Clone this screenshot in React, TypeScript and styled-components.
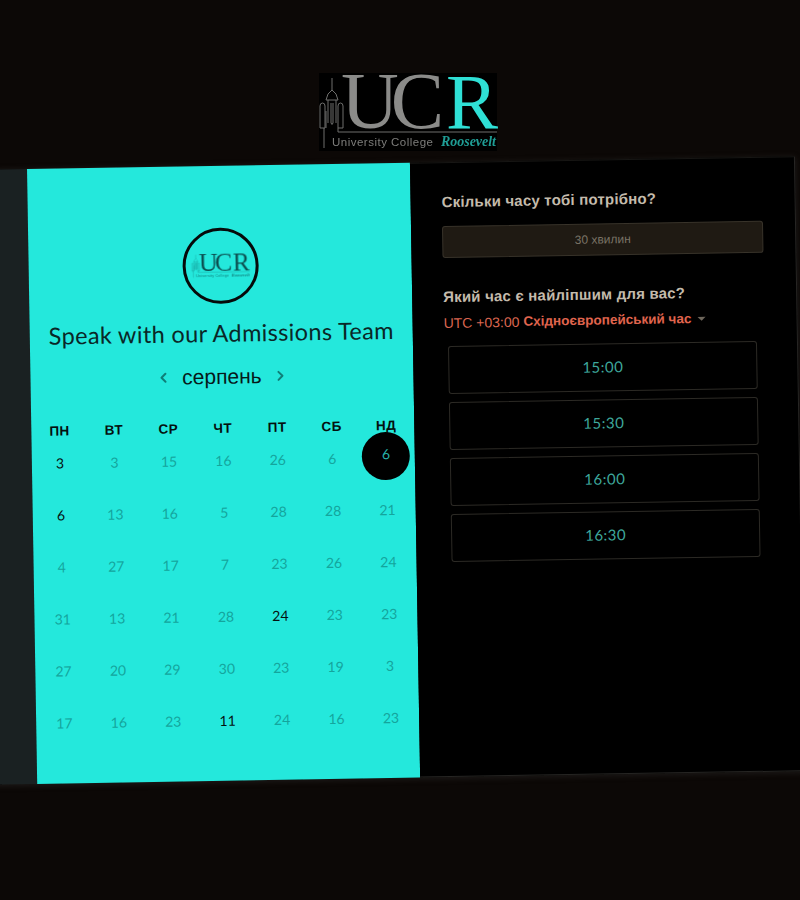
import React from "react";
import styled, { createGlobalStyle } from "styled-components";
import { ChevronLeft, ChevronRight } from "lucide-react";

const GlobalStyle = createGlobalStyle`
  html, body {
    margin: 0;
    padding: 0;
    height: 900px;
    overflow: hidden;
    background: #0c0806;
  }
`;

const Page = styled.div`
  width: 800px;
  height: 900px;
  overflow: hidden;
  display: flex;
  flex-direction: column;
  align-items: flex-start;
`;

const LogoBar = styled.div`
  width: 800px;
  height: 78px;
  margin-top: 73px;
  padding-left: 319px;
  box-sizing: border-box;
  flex-shrink: 0;
`;

const BrandSvg = styled.svg`
  display: block;
  overflow: visible;
  filter: blur(0.35px);
`;

const Card = styled.div`
  display: flex;
  flex-shrink: 0;
  margin: 18px 0 0 -20px;
  height: 615px;
  transform: rotate(-0.95deg);
  transform-origin: 47px 0;
  box-shadow: 0 1px 6px rgba(70, 70, 70, 0.35);
`;

const Sliver = styled.div`
  width: 47px;
  background: #1a2122;
`;

const LeftPanel = styled.section`
  width: 383px;
  padding-top: 62px;
  box-sizing: border-box;
  background: #24e8dc;
  display: flex;
  flex-direction: column;
  align-items: center;
`;

const Avatar = styled.div`
  width: 76px;
  height: 76px;
  box-sizing: border-box;
  border: 3px solid #060a0a;
  border-radius: 50%;
  display: flex;
  align-items: center;
  justify-content: center;
`;

const Title = styled.h1`
  margin: 14px 0 0;
  font: 400 23.5px/30px Lato, "Open Sans", sans-serif;
  letter-spacing: 0.35px;
  color: #0a2727;
  white-space: nowrap;
`;

const MonthRow = styled.div`
  margin-top: 17px;
  height: 24px;
  display: flex;
  align-items: center;
  gap: 11px;
  color: #0f7f78;
`;

const MonthName = styled.span`
  font: 400 21px/24px "Liberation Sans", Arial, sans-serif;
  color: #061a1a;
`;

const Calendar = styled.div`
  width: 383px;
  margin-top: 33px;
  padding: 0 1px;
  box-sizing: border-box;
  display: grid;
  grid-template-columns: repeat(7, 1fr);
`;

const WeekDay = styled.div`
  height: 13px;
  text-align: center;
  font: 700 13.5px/13px "Liberation Sans", Arial, sans-serif;
  letter-spacing: 0.5px;
  color: #04100f;
`;

const DayCell = styled.div`
  height: 52px;
  display: flex;
  align-items: center;
  justify-content: center;
`;

const Day = styled.span<{ $active?: boolean; $selected?: boolean }>`
  width: 48px;
  height: 48px;
  margin-bottom: ${(p) => (p.$selected ? "5px" : "0")};
  margin-left: ${(p) => (p.$selected ? "-1px" : "0")};
  padding-bottom: ${(p) => (p.$selected ? "3px" : "0")};
  box-sizing: border-box;
  display: flex;
  align-items: center;
  justify-content: center;
  border-radius: 50%;
  font: 400 14px/16px Lato, "Open Sans", sans-serif;
  background: ${(p) => (p.$selected ? "#000" : "transparent")};
  color: ${(p) =>
    p.$selected ? "#27b0a8" : p.$active ? "#04100f" : "#14a59d"};
`;

const RightPanel = styled.section`
  width: 385px;
  padding: 30px 30px 0 31px;
  box-sizing: border-box;
  background: #000;
  border-right: 1px solid #262523;
  border-top: 1px solid #171614;
  border-bottom: 1px solid #262523;
`;

const Question = styled.h2`
  margin: 0;
  font: 700 15px/18px "Liberation Sans", Arial, sans-serif;
  letter-spacing: 0.2px;
  color: #c4bbac;
  white-space: nowrap;
`;

const DurationBox = styled.div`
  margin: 15px 0 30px;
  width: 321px;
  height: 32px;
  box-sizing: border-box;
  display: flex;
  align-items: center;
  justify-content: center;
  background: #1f1a13;
  border: 1px solid #38332a;
  border-radius: 3px;
  font: 400 12px/16px "Liberation Sans", Arial, sans-serif;
  color: #7a7366;
`;

const ZoneRow = styled.div`
  margin-top: 8px;
  height: 18px;
  display: flex;
  align-items: center;
  font: 400 14px/18px "Liberation Sans", Arial, sans-serif;
  color: #db6650;
  white-space: nowrap;
`;

const ZoneName = styled.b`
  margin-left: 4px;
  font-size: 13.5px;
  color: #e0654e;
`;

const Caret = styled.i`
  margin-left: 6px;
  width: 0;
  height: 0;
  border: 4px solid transparent;
  border-top-color: #6e675c;
  border-bottom: 0;
`;

const Slots = styled.div`
  margin: 14px 0 0 4px;
  width: 309px;
  display: flex;
  flex-direction: column;
  gap: 8px;
`;

const Slot = styled.div`
  height: 48px;
  padding-bottom: 2px;
  box-sizing: border-box;
  display: flex;
  align-items: center;
  justify-content: center;
  border: 1px solid #2c2a25;
  border-radius: 3px;
  font: 400 15px/18px Lato, "Open Sans", sans-serif;
  letter-spacing: 0.5px;
  color: #3ea89c;
`;

type LogoProps = {
  width: number;
  main: string;
  accent: string;
  sub: string;
  script: string;
  line: string;
  bg?: string;
};

function Logo({ width, main, accent, sub, script, line, bg }: LogoProps) {
  return (
    <BrandSvg width={width} height={(width * 78) / 178} viewBox="0 0 178 78">
      {bg && <rect width="178" height="78" fill={bg} />}
      <g fill="none" stroke={line} strokeWidth="1">
        <path d="M13 5v12M7 27q1-7 6-10q5 3 6 10zM9 27v23M17 27v23M12 30v20q1 3 2 0V30" />
        <path d="M1 55V33q0-3 2.500-3T6 33v22M7 55V38M1 55h5M5 55v20" />
        <path d="M19 55V33q0-3 2.500-3t2.500 3v22M19 55h5M19 55v4h159" />
      </g>
      <text x="22" y="55" fontFamily="'Liberation Serif', serif" fontSize="80" letterSpacing="-8" fill={main}>
        UC
      </text>
      <text x="127" y="55" fontFamily="'Liberation Serif', serif" fontSize="78" fill={accent}>
        R
      </text>
      <text x="13" y="73" fontFamily="'Liberation Sans', sans-serif" fontSize="11.5" textLength="101" fill={sub}>
        University College
      </text>
      <text x="122" y="73" fontFamily="'Liberation Serif', serif" fontSize="14" fontWeight="700" fontStyle="italic" textLength="55" fill={script}>
        Roosevelt
      </text>
    </BrandSvg>
  );
}

const weekDays = ["ПН", "ВТ", "СР", "ЧТ", "ПТ", "СБ", "НД"];

// row by row; * marks the days that can be booked, ! the chosen one
const days = [
  "3*", "3", "15", "16", "26", "6", "6!",
  "6*", "13", "16", "5", "28", "28", "21",
  "4", "27", "17", "7", "23", "26", "24",
  "31", "13", "21", "28", "24*", "23", "23",
  "27", "20", "29", "30", "23", "19", "3",
  "17", "16", "23", "11*", "24", "16", "23",
];

const slots = ["15:00", "15:30", "16:00", "16:30"];

export default function App() {
  return (
    <Page>
      <GlobalStyle />
      <LogoBar>
        <Logo width={178} main="#8b8b89" accent="#2fe0d6" sub="#7d7d7b" script="#1f9d95" line="#6f6f6d" bg="#000" />
      </LogoBar>
      <Card>
        <Sliver />
        <LeftPanel>
          <Avatar>
            <Logo width={58} main="#0b4f50" accent="#0b4f50" sub="#12827e" script="#12827e" line="#12827e" />
          </Avatar>
          <Title>Speak with our Admissions Team</Title>
          <MonthRow>
            <ChevronLeft size={16} strokeWidth={3} />
            <MonthName>серпень</MonthName>
            <ChevronRight size={16} strokeWidth={3} />
          </MonthRow>
          <Calendar>
            {weekDays.map((d) => (
              <WeekDay key={d}>{d}</WeekDay>
            ))}
            {days.map((d, i) => (
              <DayCell key={i}>
                <Day $active={d.endsWith("*")} $selected={d.endsWith("!")}>
                  {d.replace(/[*!]/, "")}
                </Day>
              </DayCell>
            ))}
          </Calendar>
        </LeftPanel>
        <RightPanel>
          <Question>Скільки часу тобі потрібно?</Question>
          <DurationBox>30 хвилин</DurationBox>
          <Question>Який час є найліпшим для вас?</Question>
          <ZoneRow>
            UTC +03:00
            <ZoneName>Східноєвропейський час</ZoneName>
            <Caret />
          </ZoneRow>
          <Slots>
            {slots.map((s) => (
              <Slot key={s}>{s}</Slot>
            ))}
          </Slots>
        </RightPanel>
      </Card>
    </Page>
  );
}
